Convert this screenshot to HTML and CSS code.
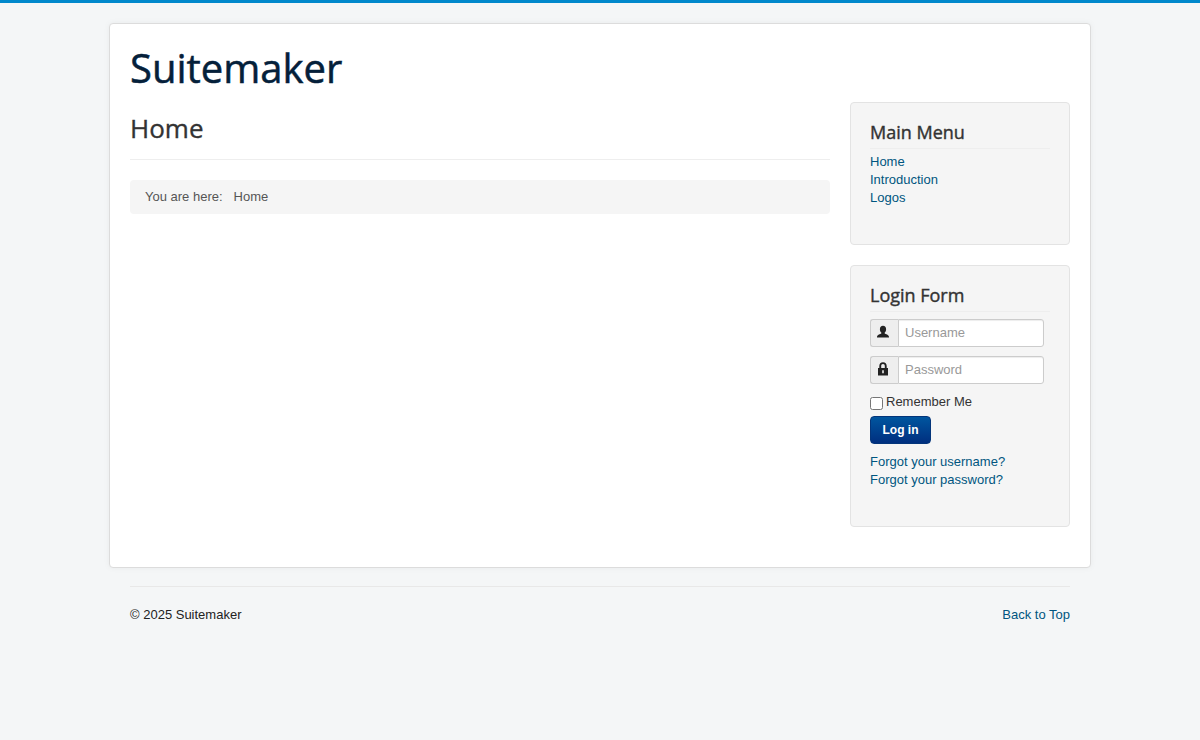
FILE: index.html
```html
<!DOCTYPE html>
<html lang="en">
<head>
<meta charset="utf-8">
<title>Suitemaker - Home</title>
<link rel="stylesheet" href="styles.css">
</head>
<body>
<div class="page">
  <main class="card">
    <header class="brand">Suitemaker</header>
    <div class="columns">
      <section class="content">
        <h2 class="page-title">Home</h2>
        <div class="breadcrumb"><span>You are here:</span><span>Home</span></div>
      </section>
      <aside class="sidebar">
        <div class="well well-menu">
          <h3 class="well-title">Main Menu</h3>
          <ul class="links">
            <li><a href="#">Home</a></li>
            <li><a href="#">Introduction</a></li>
            <li><a href="#">Logos</a></li>
          </ul>
        </div>
        <div class="well well-login">
          <h3 class="well-title">Login Form</h3>
          <div class="field">
            <span class="addon"><svg class="icon" width="14" height="14" viewBox="0 0 14 14"><path d="M7 .8C5 .8 3.900 2.200 3.900 4.200c0 1.400.5 2.700 1.400 3.400v1C4.300 9.300 1.300 9.700 1 12v.6h12V12c-.3-2.300-3.300-2.700-4.300-3.400v-1c.9-.7 1.400-2 1.400-3.400C10.100 2.200 9 .8 7 .8z"/></svg></span>
            <input class="input" type="text" placeholder="Username">
          </div>
          <div class="field">
            <span class="addon"><svg class="icon" width="14" height="14" viewBox="0 0 14 14"><path fill-rule="evenodd" d="M7 .2C4.700.2 3.300 1.800 3.300 4v2H2v7.500h10V6h-1.300V4C10.700 1.800 9.300.2 7 .2zm0 1.800c1.200 0 1.800.8 1.800 2.100v1.900H5.200V4.100C5.200 2.800 5.800 2 7 2zM6.200 8.300h1.600v3H6.200z"/></svg></span>
            <input class="input" type="password" placeholder="Password">
          </div>
          <label class="remember"><input class="check" type="checkbox"><span class="remember-text">Remember Me</span></label>
          <button class="btn" type="button">Log in</button>
          <ul class="links forgot">
            <li><a href="#">Forgot your username?</a></li>
            <li><a href="#">Forgot your password?</a></li>
          </ul>
        </div>
      </aside>
    </div>
  </main>
  <footer class="footer">
    <span>© 2025 Suitemaker</span>
    <a href="#">Back to Top</a>
  </footer>
</div>
</body>
</html>
```
FILE: styles.css
```css
* { box-sizing: border-box; }
html, body { margin: 0; height: 100%; }
body {
  background: #f4f6f7;
  border-top: 3px solid #0088cc;
  font: 13px/18px "Liberation Sans", Arial, sans-serif;
  color: #333;
}
a { color: #005580; text-decoration: none; }
.page { width: 982px; margin: 0 auto; padding-top: 20px; }
.card {
  background: #fff;
  border: 1px solid #dcdcdc;
  border-radius: 4px;
  box-shadow: 0 0 6px rgba(0,0,0,.05);
  padding: 20px;
  height: 545px;
}
.brand {
  font: 40px/48px "Open Sans", sans-serif;
  color: #04203a;
  margin-bottom: 10px;
  -webkit-text-stroke: 0.5px #04203a;
}
.columns { display: flex; gap: 20px; }
.content { width: 700px; }
.page-title {
  font: 400 26px/36px "Open Sans", sans-serif;
  color: #333;
  margin: 0 0 20px;
  padding: 8px 0 0;
  border-bottom: 1px solid #eee;
  height: 58px;
  -webkit-text-stroke: 0.35px #333;
}
.breadcrumb {
  background: #f5f5f5;
  border-radius: 4px;
  height: 34px;
  padding: 8px 15px;
  display: flex;
  gap: 11px;
  color: #555;
}
.sidebar { width: 220px; display: flex; flex-direction: column; gap: 20px; }
.well {
  background: #f5f5f5;
  border: 1px solid #e3e3e3;
  border-radius: 4px;
  padding: 19px;
}
.well-menu { height: 143px; }
.well-login { height: 262px; }
.well-title {
  font: 400 18px/20px "Open Sans", sans-serif;
  color: #333;
  margin: 0 0 4px;
  height: 27px;
  border-bottom: 1px solid #eee;
  -webkit-text-stroke: 0.4px #333;
}
.links { list-style: none; margin: 0; padding: 0; }
.field { display: flex; width: 174px; height: 28px; margin-bottom: 9px; }
.well-login .well-title { margin-bottom: 7px; }
.addon {
  width: 28px;
  background: #eee;
  border: 1px solid #ccc;
  border-right: 0;
  border-radius: 3px 0 0 3px;
  display: flex;
  align-items: center;
  justify-content: center;
  padding: 0 3px 2px 0;
}
.icon { fill: #222; display: block; }
.input {
  flex: 1;
  min-width: 0;
  border: 1px solid #ccc;
  border-radius: 0 3px 3px 0;
  background: #fff;
  padding: 0 6px 2px;
  font: 13px "Liberation Sans", Arial, sans-serif;
  box-shadow: inset 0 1px 1px rgba(0,0,0,.075);
}
.input::placeholder { color: #999; opacity: 1; }
.remember { display: flex; align-items: flex-start; height: 24px; gap: 3px; color: #333; margin-top: -1px; }
.remember-text { margin-top: 1px; }
.check { width: 13px; height: 13px; margin: 5px 0 0; }
.btn {
  display: block;
  width: 61px;
  height: 28px;
  border: 1px solid #04357a;
  border-radius: 4px;
  background: linear-gradient(#00569f, #002f7f);
  color: #fff;
  font: 700 12px/18px "Liberation Sans", Arial, sans-serif;
  padding: 0;
}
.forgot { margin-top: 9px; }
.footer {
  margin: 18px 21px 0;
  padding-top: 19px;
  border-top: 1px solid #e8e8e8;
  display: flex;
  justify-content: space-between;
  color: #222;
}
```
